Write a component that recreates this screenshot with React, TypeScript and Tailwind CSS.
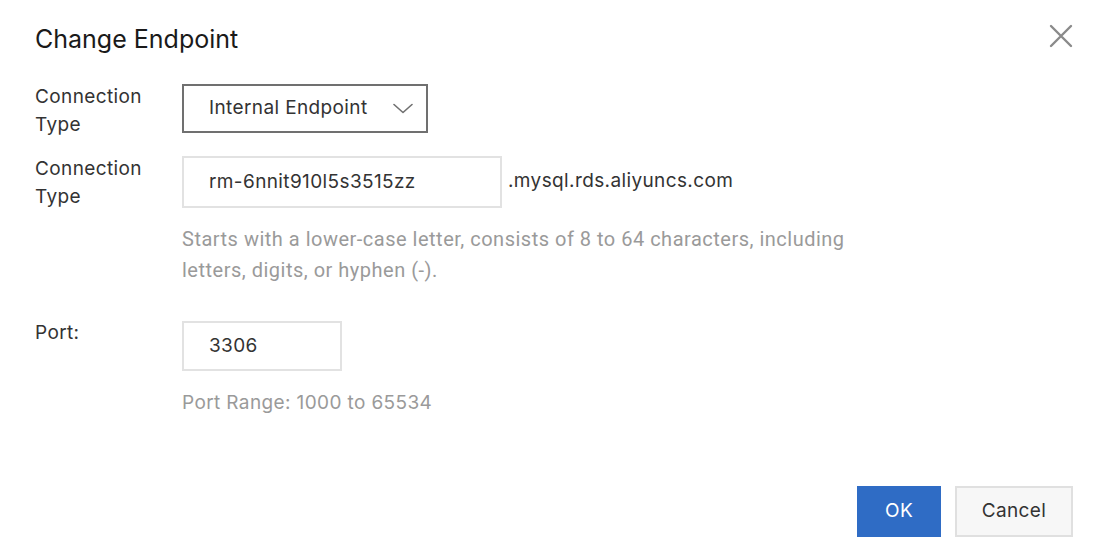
function CloseIcon() {
  return (
    <svg width="24" height="24" viewBox="0 0 24 24" fill="none" stroke="#8a8a8a" strokeWidth="2.4" strokeLinecap="round">
      <path d="M2 2L22 22M22 2L2 22" />
    </svg>
  )
}

function Chevron() {
  return (
    <svg width="20" height="11" viewBox="0 0 20 11" fill="none" stroke="#707070" strokeWidth="1.6" strokeLinecap="round" strokeLinejoin="round">
      <path d="M1 1.5L10 9.5L19 1.5" />
    </svg>
  )
}

export default function App() {
  return (
    <div
      className="w-[1098px] h-[556px] bg-white flex flex-col text-[#333]"
      style={{ fontFamily: 'Inter, "Noto Sans", sans-serif' }}
    >
      <div className="flex items-start justify-between pl-[35px] pr-[25px] pt-[23px]">
        <h1 className="text-[25px] leading-8 text-[#1a1a1a] font-normal">Change Endpoint</h1>
        <button className="mt-[1px]" title="Close">
          <CloseIcon />
        </button>
      </div>

      <div className="pl-[35px] mt-[28px] flex flex-col text-[19px] tracking-[0.02em]">
        <div className="flex items-start">
          <div className="w-[147px] leading-7">
            Connection
            <br />
            Type
          </div>
          <div className="mt-px w-[246px] h-[49px] border-2 border-[#707070] flex items-center justify-between pl-[25px] pr-[13px]">
            <span>Internal Endpoint</span>
            <Chevron />
          </div>
        </div>

        <div className="flex items-start mt-[16px]">
          <div className="w-[147px] leading-7">
            Connection
            <br />
            Type
          </div>
          <div className="mt-px flex items-center">
            <div className="w-[320px] h-[52px] border-2 border-[#e2e2e2] flex items-center pl-[25px]">
              <span>rm-6nnit910l5s3515zz</span>
            </div>
            <span className="ml-[6px] -mt-[2px]">.mysql.rds.aliyuncs.com</span>
          </div>
        </div>

        <p
          className="pl-[147px] mt-[13px] text-[20px] tracking-[0.025em] leading-[31px] text-[#9a9a9a]"
          style={{ fontFamily: 'Roboto, "Liberation Sans", sans-serif' }}
        >
          Starts with a lower-case letter, consists of 8 to 64 characters, including
          <br />
          letters, digits, or hyphen (-).
        </p>

        <div className="flex items-start mt-[33px]">
          <div className="w-[147px] leading-7">Port:</div>
          <div className="mt-[2px] w-[160px] h-[50px] border-2 border-[#e2e2e2] flex items-center pl-[25px]">
            <span>3306</span>
          </div>
        </div>

        <p className="pl-[147px] mt-[18px] leading-7 text-[#9a9a9a]">Port Range: 1000 to 65534</p>
      </div>

      <div className="mt-auto flex justify-end gap-[14px] pr-[25px] pb-[19px] text-[19px] tracking-[0.02em]">
        <button className="w-[84px] h-[51px] bg-[#2f6cc5] text-white">OK</button>
        <button className="w-[118px] h-[51px] bg-[#f7f7f7] border-2 border-[#e0e0e0] text-[#333]">Cancel</button>
      </div>
    </div>
  )
}
